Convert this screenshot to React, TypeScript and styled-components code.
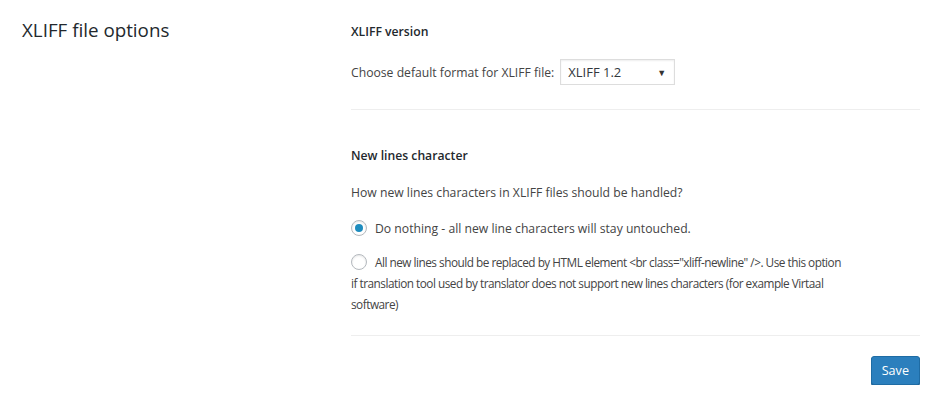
import styled, { createGlobalStyle } from "styled-components";

const GlobalStyle = createGlobalStyle`
  body {
    margin: 0;
    background: #fff;
    font-family: "Open Sans", "Noto Sans", sans-serif;
    font-size: 12.2px;
    color: #444;
  }
`;

const Page = styled.div`
  display: grid;
  grid-template-columns: 351px 569px;
  padding-top: 19px;
`;

const Title = styled.h2`
  margin: 0;
  padding-left: 22px;
  font-size: 18.8px;
  font-weight: 400;
  line-height: 22px;
  color: #23282d;
`;

const Section = styled.div<{ $first?: boolean }>`
  padding: ${(p) => (p.$first ? "3px 0 24px" : "36px 0 20px")};
  border-bottom: 1px solid #eee;
`;

const Heading = styled.h3`
  margin: 0 0 17px;
  font-size: 12.2px;
  font-weight: 600;
  line-height: 20px;
  color: #23282d;
`;

const Text = styled.p`
  margin: 0 0 15px;
  line-height: 20px;
`;

const Row = styled.label`
  display: flex;
  align-items: center;
  gap: 6px;
  margin-top: 16px;
`;

const Select = styled.div`
  width: 115px;
  height: 26px;
  box-sizing: border-box;
  border: 1px solid #ddd;
  box-shadow: inset 0 1px 2px rgba(0, 0, 0, 0.07);
  padding: 0 0 0 7px;
  display: flex;
  align-items: center;
  justify-content: space-between;
  color: #32373c;
  font-size: 13px;
`;

const Arrow = styled.span`
  font-size: 9px;
  margin-right: 8px;
  color: #333;
`;

const Option = styled.label<{ $tight?: boolean }>`
  display: block;
  max-width: 498px;
  font-size: ${(p) => (p.$tight ? "11.8px" : "12.2px")};
  letter-spacing: ${(p) => (p.$tight ? "-0.5px" : "0")};
  line-height: 21px;
  margin-bottom: 13px;
  &:last-child {
    margin-bottom: 0;
  }
`;

const Radio = styled.span<{ $checked?: boolean }>`
  display: inline-block;
  vertical-align: -3px;
  box-sizing: border-box;
  width: 16px;
  height: 16px;
  margin-right: 8px;
  border-radius: 50%;
  border: 1px solid #b4b9be;
  background: #fff;
  box-shadow: inset 0 1px 2px rgba(0, 0, 0, 0.1);
  position: relative;
  &::after {
    content: "";
    display: ${(p) => (p.$checked ? "block" : "none")};
    position: absolute;
    left: 3px;
    top: 3px;
    width: 8px;
    height: 8px;
    border-radius: 50%;
    background: #1e8cbe;
  }
`;

const Actions = styled.div`
  display: flex;
  justify-content: flex-end;
  padding-top: 20px;
`;

const Button = styled.button`
  height: 29px;
  padding: 0 10px;
  font-family: inherit;
  font-size: 12.6px;
  color: #fff;
  background: #2b7fbd;
  border: 1px solid #1f6ca4;
  border-radius: 3px;
  box-shadow: 0 1px 0 #1d5f91;
  cursor: pointer;
`;

const Main = styled.div``;

export default function App() {
  return (
    <>
      <GlobalStyle />
      <Page>
        <Title>XLIFF file options</Title>
        <Main>
          <Section $first>
            <Heading>XLIFF version</Heading>
            <Row>
              Choose default format for XLIFF file:
              <Select>
                XLIFF 1.2<Arrow>▼</Arrow>
              </Select>
            </Row>
          </Section>
          <Section>
            <Heading>New lines character</Heading>
            <Text>How new lines characters in XLIFF files should be handled?</Text>
            <Option>
              <Radio $checked />
              Do nothing - all new line characters will stay untouched.
            </Option>
            <Option $tight>
              <Radio />
              All new lines should be replaced by HTML element &lt;br class="xliff-newline" /&gt;. Use this option if
              translation tool used by translator does not support new lines characters (for example Virtaal software)
            </Option>
          </Section>
          <Actions>
            <Button>Save</Button>
          </Actions>
        </Main>
      </Page>
    </>
  );
}
